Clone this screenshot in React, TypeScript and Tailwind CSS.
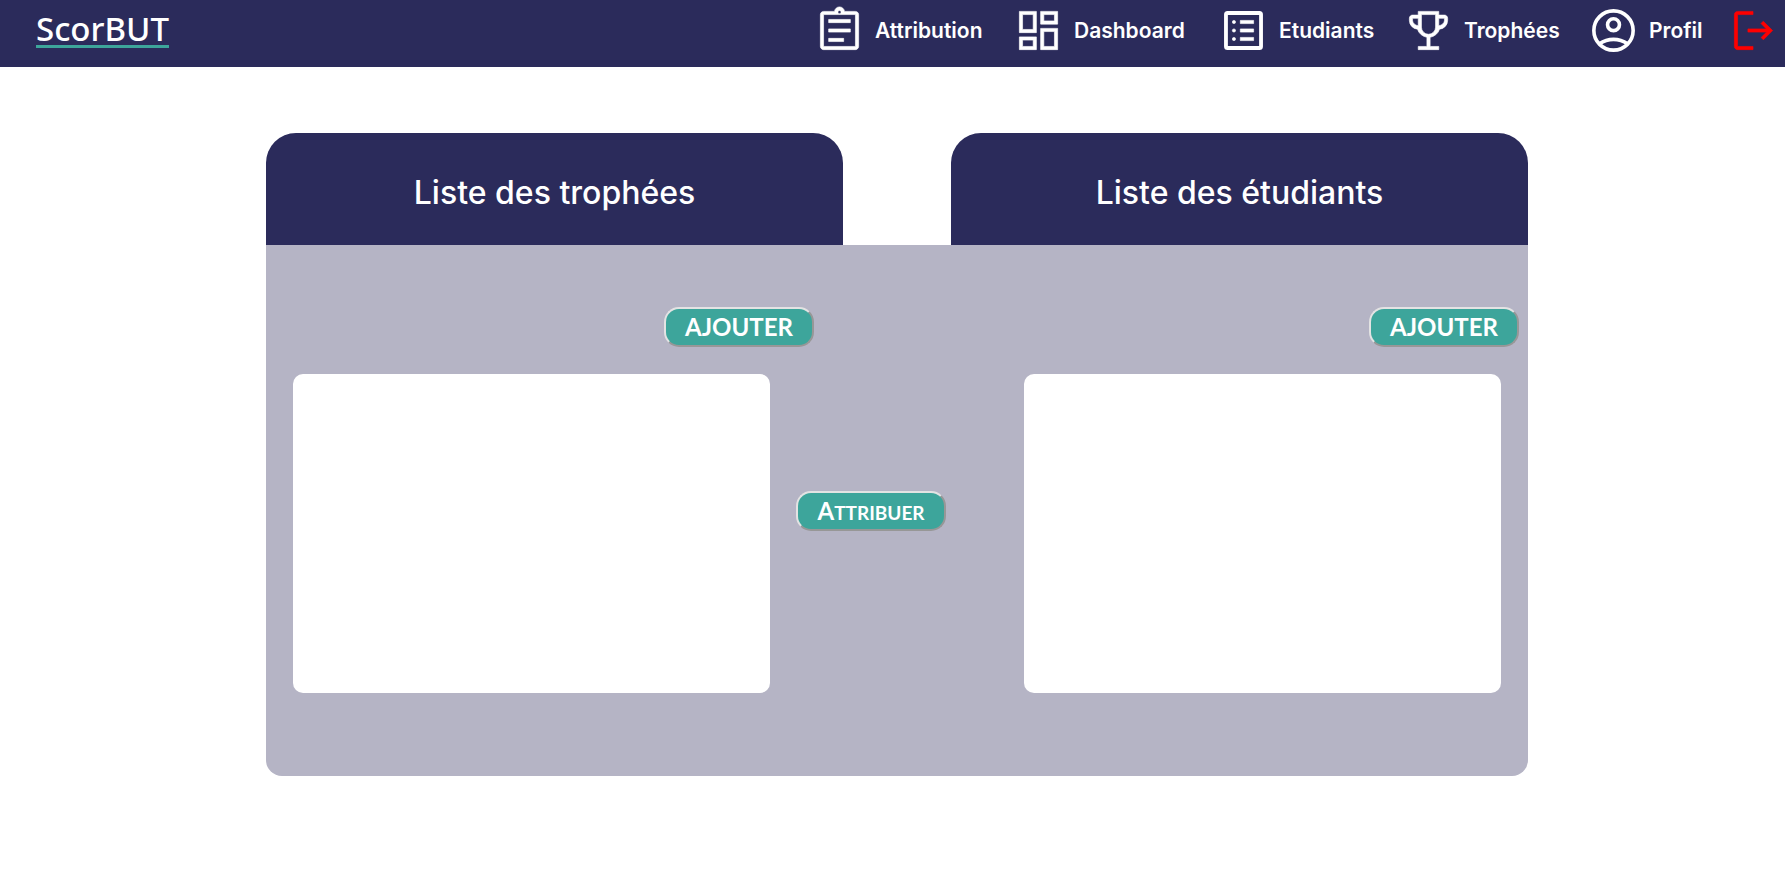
import type { ReactNode } from "react";

const icons = {
  attribution: (
    <path d="M13.8 34.4h14.1v-3H13.8Zm0-8.9h20.4v-3H13.8Zm0-8.9h20.4v-3H13.8ZM9 42q-1.2 0-2.1-.9Q6 40.2 6 39V9q0-1.2.9-2.1Q7.800 6 9 6h10.3q.2-1.800 1.550-3Q22.200 1.800 24 1.800q1.800 0 3.150 1.200 1.350 1.200 1.550 3H39q1.200 0 2.100.9.9.9.9 2.100v30q0 1.200-.9 2.100-.9.9-2.100.9Zm0-3h30V9H9v30ZM24 8.150q.65 0 1.075-.425.425-.425.425-1.075 0-.65-.425-1.075Q24.650 5.150 24 5.150q-.65 0-1.075.425-.425.425-.425 1.075 0 .65.425 1.075.425.425 1.075.425Z" />
  ),
  dashboard: (
    <path d="M26 18V6h16v12H26ZM6 26V6h16v20H6Zm20 16V22h16v20H26ZM6 42V30h16v12H6Zm3-19h10V9H9v14Zm20 16h10V25H29v14Zm0-24h10V9H29v6ZM9 39h10v-6H9v6Z" />
  ),
  students: (
    <g>
      <rect x="7.500" y="7.500" width="33" height="33" rx="1.500" fill="none" strokeWidth="3.600" />
      <circle cx="15" cy="16" r="1.500" />
      <circle cx="15" cy="24" r="1.500" />
      <circle cx="15" cy="32" r="1.500" />
      <path d="M21 14.500h12.500v3H21ZM21 22.500h12.500v3H21ZM21 30.500h12.500v3H21Z" />
    </g>
  ),
  trophies: (
    <path d="M14.350 42v-3h8.150v-8.600q-3.150-.55-5.525-2.550-2.375-2-3.325-5.050-3.250-.35-5.450-2.675Q6 17.800 6 14.600V12.500q0-1.250.875-2.125T9 9.500h5.350V6h19.300v3.500H39q1.250 0 2.125.875T42 12.500v2.100q0 3.200-2.200 5.525-2.200 2.325-5.450 2.675-.95 3.050-3.325 5.050-2.375 2-5.525 2.550V39h8.150v3Zm0-22.450V12.500H9v2.100q0 1.850 1.550 3.225 1.550 1.375 3.800 1.725ZM24 27.550q2.750 0 4.700-1.975 1.950-1.975 1.950-4.725V9h-13.300v11.850q0 2.750 1.950 4.725T24 27.550Zm9.650-8q2.200-.35 3.775-1.725T39 14.600v-2.100h-5.350Z" />
  ),
  profile: (
    <g fill="none" strokeWidth="3.400">
      <circle cx="24" cy="24" r="18.500" />
      <circle cx="24" cy="18.500" r="5.600" />
      <path d="M10.800 36.500Q16.800 32.300 24 32.300T37.200 36.500" />
    </g>
  ),
  logout: (
    <path d="M9 42q-1.200 0-2.100-.9Q6 40.200 6 39V9q0-1.200.9-2.100Q7.800 6 9 6h14.550v3H9v30h14.550v3Zm24.300-9.250-2.150-2.150 5.100-5.100h-17.500v-3h17.400l-5.100-5.100 2.150-2.150 8.800 8.800Z" />
  ),
};

function Icon({ children }: { children: ReactNode }) {
  return (
    <svg
      viewBox="0 0 48 48"
      fill="currentColor"
      stroke="currentColor"
      strokeWidth="0.6"
      aria-hidden="true"
      className="size-[51px] shrink-0"
    >
      {children}
    </svg>
  );
}

const links = [
  { label: "Attribution", icon: icons.attribution },
  { label: "Dashboard", icon: icons.dashboard },
  { label: "Etudiants", icon: icons.students },
  { label: "Trophées", icon: icons.trophies },
  { label: "Profil", icon: icons.profile },
];

function ActionButton({ children, className = "" }: { children: ReactNode; className?: string }) {
  return (
    <button
      type="button"
      className={`h-10 w-[150px] shrink-0 rounded-[15px] border-2 border-t-[#e3e3e3] border-r-[#979797] border-b-[#979797] border-l-[#e3e3e3] bg-[#3da59b] font-[Lato,sans-serif] text-2xl leading-9 font-bold text-white ${className}`}
    >
      {children}
    </button>
  );
}

function Tab({ children }: { children: ReactNode }) {
  return (
    <h2 className="flex h-28 flex-1 items-center justify-center rounded-t-[30px] bg-[#2b2b5b] pt-2 text-[32px] leading-10 font-medium text-white">
      {children}
    </h2>
  );
}

export default function App() {
  return (
    <div className="min-h-screen bg-white font-[Inter,sans-serif]">
      <header className="flex h-[67px] items-start justify-between bg-[#2b2b5b] pr-1.5 pl-9 text-white">
        <a
          href="#accueil"
          className="mt-3 border-b-3 border-[#3da59b] font-['Noto_Sans',sans-serif] text-[33px] leading-[33px] font-medium"
        >
          ScorBUT
        </a>
        <nav className="mt-[5px] grid grid-cols-[171px_177px_157px_157px_112px_51px] items-center gap-7">
          {links.map(({ label, icon }) => (
            <a
              key={label}
              href={`#${label.toLowerCase()}`}
              className="flex items-center gap-2.5 text-[21px] leading-7 font-semibold"
            >
              <Icon>{icon}</Icon>
              <span>{label}</span>
            </a>
          ))}
          <a href="#deconnexion" aria-label="Déconnexion" className="text-[#ff0000]">
            <Icon>{icons.logout}</Icon>
          </a>
        </nav>
      </header>

      <div className="grid grid-cols-[266fr_1262fr_257fr] pt-[66px]">
        <main className="col-start-2">
          <div className="flex gap-[108px]">
            <Tab>Liste des trophées</Tab>
            <Tab>Liste des étudiants</Tab>
          </div>
          <div className="rounded-b-2xl bg-[#b5b4c5] pt-[62px] pb-[83px]">
            <div className="flex justify-between pr-[9px] pl-[398px]">
              <ActionButton>AJOUTER</ActionButton>
              <ActionButton>AJOUTER</ActionButton>
            </div>
            <div className="mt-[27px] flex items-start px-[27px]">
              <ul aria-label="Trophées" className="h-[319px] flex-1 rounded-[10px] bg-white" />
              <ActionButton className="mt-[117px] mr-[78px] ml-[26px]">
                <span className="inline-block text-[19px] uppercase first-letter:text-2xl">Attribuer</span>
              </ActionButton>
              <ul aria-label="Etudiants" className="h-[319px] flex-1 rounded-[10px] bg-white" />
            </div>
          </div>
        </main>
      </div>
    </div>
  );
}
